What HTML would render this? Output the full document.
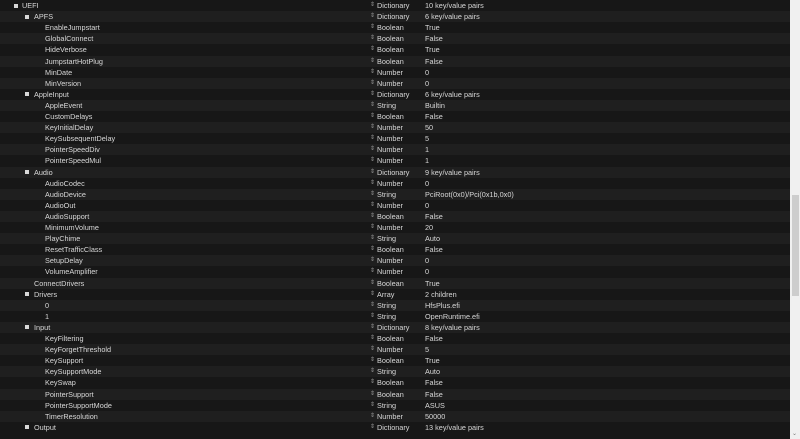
<!DOCTYPE html>
<html><head><meta charset="utf-8"><style>
*{margin:0;padding:0;box-sizing:border-box}
body{width:800px;height:439px;background:#171717;overflow:hidden;position:relative;font-family:"Liberation Sans",sans-serif;font-size:7.3px;color:#d8d8d8}
.r{position:absolute;left:0;width:790px;height:11.1px;line-height:11.1px;white-space:nowrap}
.r.o{background:#1f1f1f}
.k,.t,.v{position:absolute;top:0}
.t{left:377px}.v{left:425px}
.a{position:absolute;left:370px;top:0;color:#999;font-size:6px;line-height:11px}
.b{position:absolute;top:3.5px;width:4px;height:4px;background:#d8d8d8}
.sb{position:absolute;left:790px;top:0;width:10px;height:439px;background:#f0f0f0}
.th{position:absolute;left:792px;top:195px;width:7px;height:101px;background:#cdcdcd}
.ar{position:absolute;left:792px;top:430px;font-size:6px;color:#777}
</style></head><body>
<div class="r" style="top:0px"><div class="b" style="left:14px"></div><span class="k" style="left:22px">UEFI</span><span class="a">⇕</span><span class="t">Dictionary</span><span class="v">10 key/value pairs</span></div>
<div class="r o" style="top:11.1px"><div class="b" style="left:25px"></div><span class="k" style="left:34px">APFS</span><span class="a">⇕</span><span class="t">Dictionary</span><span class="v">6 key/value pairs</span></div>
<div class="r" style="top:22.2px"><span class="k" style="left:45px">EnableJumpstart</span><span class="a">⇕</span><span class="t">Boolean</span><span class="v">True</span></div>
<div class="r o" style="top:33.3px"><span class="k" style="left:45px">GlobalConnect</span><span class="a">⇕</span><span class="t">Boolean</span><span class="v">False</span></div>
<div class="r" style="top:44.4px"><span class="k" style="left:45px">HideVerbose</span><span class="a">⇕</span><span class="t">Boolean</span><span class="v">True</span></div>
<div class="r o" style="top:55.5px"><span class="k" style="left:45px">JumpstartHotPlug</span><span class="a">⇕</span><span class="t">Boolean</span><span class="v">False</span></div>
<div class="r" style="top:66.6px"><span class="k" style="left:45px">MinDate</span><span class="a">⇕</span><span class="t">Number</span><span class="v">0</span></div>
<div class="r o" style="top:77.7px"><span class="k" style="left:45px">MinVersion</span><span class="a">⇕</span><span class="t">Number</span><span class="v">0</span></div>
<div class="r" style="top:88.8px"><div class="b" style="left:25px"></div><span class="k" style="left:34px">AppleInput</span><span class="a">⇕</span><span class="t">Dictionary</span><span class="v">6 key/value pairs</span></div>
<div class="r o" style="top:99.9px"><span class="k" style="left:45px">AppleEvent</span><span class="a">⇕</span><span class="t">String</span><span class="v">Builtin</span></div>
<div class="r" style="top:111px"><span class="k" style="left:45px">CustomDelays</span><span class="a">⇕</span><span class="t">Boolean</span><span class="v">False</span></div>
<div class="r o" style="top:122.1px"><span class="k" style="left:45px">KeyInitialDelay</span><span class="a">⇕</span><span class="t">Number</span><span class="v">50</span></div>
<div class="r" style="top:133.2px"><span class="k" style="left:45px">KeySubsequentDelay</span><span class="a">⇕</span><span class="t">Number</span><span class="v">5</span></div>
<div class="r o" style="top:144.3px"><span class="k" style="left:45px">PointerSpeedDiv</span><span class="a">⇕</span><span class="t">Number</span><span class="v">1</span></div>
<div class="r" style="top:155.4px"><span class="k" style="left:45px">PointerSpeedMul</span><span class="a">⇕</span><span class="t">Number</span><span class="v">1</span></div>
<div class="r o" style="top:166.5px"><div class="b" style="left:25px"></div><span class="k" style="left:34px">Audio</span><span class="a">⇕</span><span class="t">Dictionary</span><span class="v">9 key/value pairs</span></div>
<div class="r" style="top:177.6px"><span class="k" style="left:45px">AudioCodec</span><span class="a">⇕</span><span class="t">Number</span><span class="v">0</span></div>
<div class="r o" style="top:188.7px"><span class="k" style="left:45px">AudioDevice</span><span class="a">⇕</span><span class="t">String</span><span class="v">PciRoot(0x0)/Pci(0x1b,0x0)</span></div>
<div class="r" style="top:199.8px"><span class="k" style="left:45px">AudioOut</span><span class="a">⇕</span><span class="t">Number</span><span class="v">0</span></div>
<div class="r o" style="top:210.9px"><span class="k" style="left:45px">AudioSupport</span><span class="a">⇕</span><span class="t">Boolean</span><span class="v">False</span></div>
<div class="r" style="top:222px"><span class="k" style="left:45px">MinimumVolume</span><span class="a">⇕</span><span class="t">Number</span><span class="v">20</span></div>
<div class="r o" style="top:233.1px"><span class="k" style="left:45px">PlayChime</span><span class="a">⇕</span><span class="t">String</span><span class="v">Auto</span></div>
<div class="r" style="top:244.2px"><span class="k" style="left:45px">ResetTrafficClass</span><span class="a">⇕</span><span class="t">Boolean</span><span class="v">False</span></div>
<div class="r o" style="top:255.3px"><span class="k" style="left:45px">SetupDelay</span><span class="a">⇕</span><span class="t">Number</span><span class="v">0</span></div>
<div class="r" style="top:266.4px"><span class="k" style="left:45px">VolumeAmplifier</span><span class="a">⇕</span><span class="t">Number</span><span class="v">0</span></div>
<div class="r o" style="top:277.5px"><span class="k" style="left:34px">ConnectDrivers</span><span class="a">⇕</span><span class="t">Boolean</span><span class="v">True</span></div>
<div class="r" style="top:288.6px"><div class="b" style="left:25px"></div><span class="k" style="left:34px">Drivers</span><span class="a">⇕</span><span class="t">Array</span><span class="v">2 children</span></div>
<div class="r o" style="top:299.7px"><span class="k" style="left:45px">0</span><span class="a">⇕</span><span class="t">String</span><span class="v">HfsPlus.efi</span></div>
<div class="r" style="top:310.8px"><span class="k" style="left:45px">1</span><span class="a">⇕</span><span class="t">String</span><span class="v">OpenRuntime.efi</span></div>
<div class="r o" style="top:321.9px"><div class="b" style="left:25px"></div><span class="k" style="left:34px">Input</span><span class="a">⇕</span><span class="t">Dictionary</span><span class="v">8 key/value pairs</span></div>
<div class="r" style="top:333px"><span class="k" style="left:45px">KeyFiltering</span><span class="a">⇕</span><span class="t">Boolean</span><span class="v">False</span></div>
<div class="r o" style="top:344.1px"><span class="k" style="left:45px">KeyForgetThreshold</span><span class="a">⇕</span><span class="t">Number</span><span class="v">5</span></div>
<div class="r" style="top:355.2px"><span class="k" style="left:45px">KeySupport</span><span class="a">⇕</span><span class="t">Boolean</span><span class="v">True</span></div>
<div class="r o" style="top:366.3px"><span class="k" style="left:45px">KeySupportMode</span><span class="a">⇕</span><span class="t">String</span><span class="v">Auto</span></div>
<div class="r" style="top:377.4px"><span class="k" style="left:45px">KeySwap</span><span class="a">⇕</span><span class="t">Boolean</span><span class="v">False</span></div>
<div class="r o" style="top:388.5px"><span class="k" style="left:45px">PointerSupport</span><span class="a">⇕</span><span class="t">Boolean</span><span class="v">False</span></div>
<div class="r" style="top:399.6px"><span class="k" style="left:45px">PointerSupportMode</span><span class="a">⇕</span><span class="t">String</span><span class="v">ASUS</span></div>
<div class="r o" style="top:410.7px"><span class="k" style="left:45px">TimerResolution</span><span class="a">⇕</span><span class="t">Number</span><span class="v">50000</span></div>
<div class="r" style="top:421.8px"><div class="b" style="left:25px"></div><span class="k" style="left:34px">Output</span><span class="a">⇕</span><span class="t">Dictionary</span><span class="v">13 key/value pairs</span></div>
<div class="sb"></div><div class="th"></div><div class="ar">⌄</div>
</body></html>
